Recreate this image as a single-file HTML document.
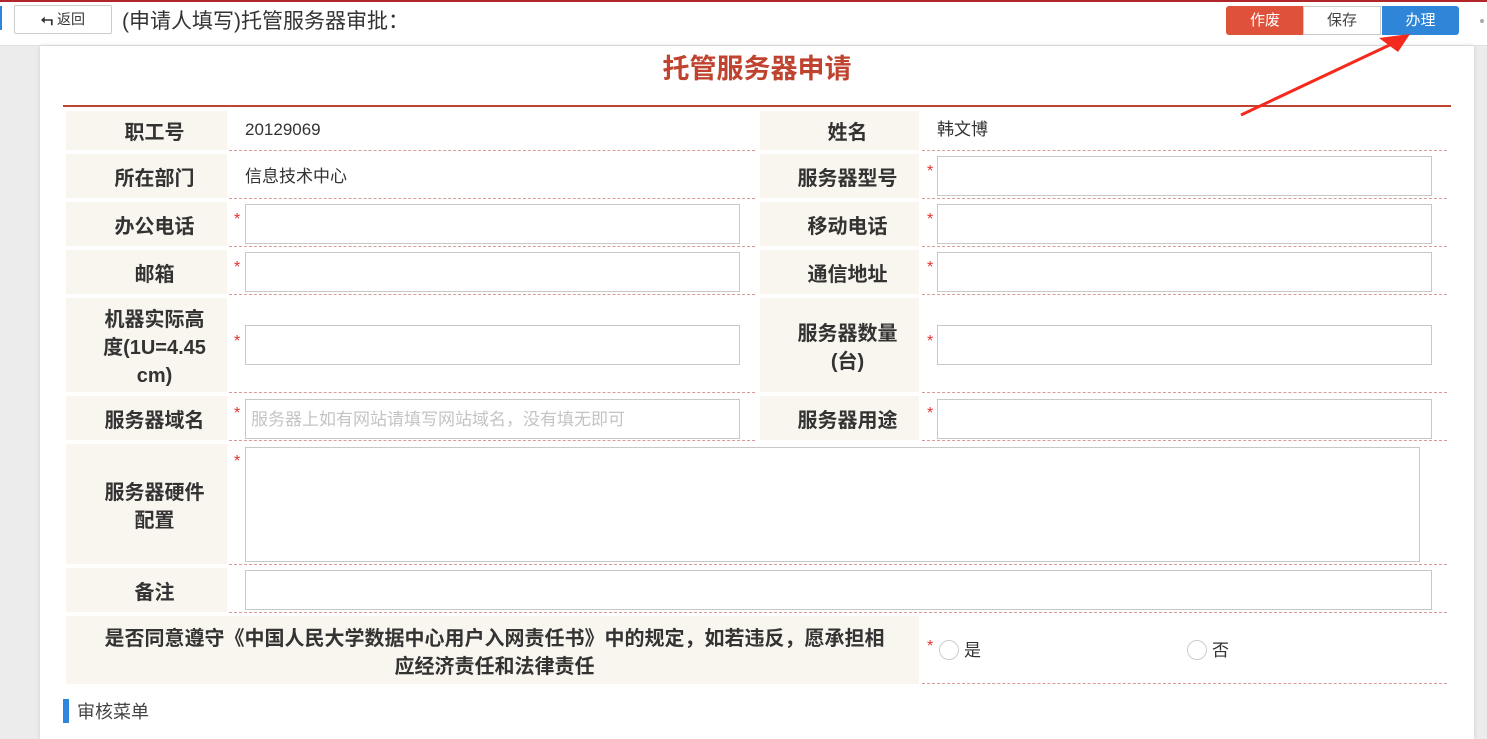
<!DOCTYPE html>
<html><head><meta charset="utf-8"><style>
*{margin:0;padding:0;box-sizing:border-box}
body{width:1487px;height:739px;overflow:hidden;background:#ececec;font-family:"Liberation Sans","Noto Sans CJK SC",sans-serif;position:relative;color:#333}
.a{position:absolute}
.lb{position:absolute;background:#f9f5ef;font-weight:bold;font-size:20px;color:#333;display:flex;align-items:center;justify-content:center;text-align:center;line-height:28px;padding:5px 0 0 16px}
.vc{position:absolute;border-bottom:1px dashed #d99a9a}
.in{position:absolute;border:1px solid #c8c8c8;background:#fff}
.st{position:absolute;color:#e83030;font-size:16px}
.tx{position:absolute;font-size:17px;color:#333;line-height:20px}
</style></head><body>
<div class="a" style="left:0;top:0;width:1487px;height:46px;background:#fff;border-bottom:1px solid #e2e2e2"></div>
<div class="a" style="left:0;top:0;width:1487px;height:2px;background:#b0262a"></div>
<div class="a" style="left:0;top:6px;width:2px;height:24px;background:#2e86de"></div>
<div class="a" style="left:14px;top:5px;width:98px;height:29px;border:1px solid #ccc;border-radius:2px;background:#fff;font-size:14px;line-height:27px;text-align:center;color:#333"><b style="font-size:15px">⮢</b> 返回</div>
<div class="a" style="left:122px;top:9px;font-size:21px;color:#333;line-height:26px">(申请人填写)托管服务器审批：</div>
<div class="a" style="left:1226px;top:6px;width:78px;height:29px;background:#df513b;border-radius:3px 0 0 3px;color:#fff;font-size:15px;line-height:29px;text-align:center">作废</div>
<div class="a" style="left:1303px;top:6px;width:78px;height:29px;background:#fff;border:1px solid #ccc;color:#444;font-size:15px;line-height:27px;text-align:center">保存</div>
<div class="a" style="left:1382px;top:6px;width:77px;height:29px;background:#2f86d9;border-radius:0 3px 3px 0;color:#fff;font-size:15px;line-height:29px;text-align:center">办理</div>
<div class="a" style="left:1480px;top:19px;width:4px;height:4px;border-radius:50%;background:#aaa"></div>
<div class="a" style="left:40px;top:46px;width:1434px;height:693px;background:#fff;box-shadow:0 0 4px #ccc"></div>
<div class="a" style="left:0;width:1487px;text-align:center;font-size:27px;font-weight:bold;color:#c0432f;top:51px;padding-left:27px;line-height:36px">托管服务器申请</div>
<div class="a" style="left:63px;top:105px;width:1388px;height:2px;background:#c0432f"></div>

<div class="lb" style="left:66px;top:111px;width:161px;height:39px">职工号</div>
<div class="vc" style="left:229px;top:111px;width:526px;height:40px"></div>
<div class="tx" style="left:245px;top:120px">20129069</div>
<div class="lb" style="left:760px;top:111px;width:159px;height:39px">姓名</div>
<div class="vc" style="left:922px;top:111px;width:525px;height:40px"></div>
<div class="tx" style="left:937px;top:120px">韩文博</div>

<div class="lb" style="left:66px;top:154px;width:161px;height:44px">所在部门</div>
<div class="vc" style="left:229px;top:154px;width:526px;height:45px"></div>
<div class="tx" style="left:245px;top:167px">信息技术中心</div>
<div class="lb" style="left:760px;top:154px;width:159px;height:44px">服务器型号</div>
<div class="vc" style="left:922px;top:154px;width:525px;height:45px"></div>
<div class="st" style="left:927px;top:163px">*</div><div class="in" style="left:937px;top:156px;width:495px;height:40px"></div>

<div class="lb" style="left:66px;top:202px;width:161px;height:44px">办公电话</div>
<div class="vc" style="left:229px;top:202px;width:526px;height:45px"></div>
<div class="st" style="left:234px;top:211px">*</div><div class="in" style="left:245px;top:204px;width:495px;height:40px"></div>
<div class="lb" style="left:760px;top:202px;width:159px;height:44px">移动电话</div>
<div class="vc" style="left:922px;top:202px;width:525px;height:45px"></div>
<div class="st" style="left:927px;top:211px">*</div><div class="in" style="left:937px;top:204px;width:495px;height:40px"></div>

<div class="lb" style="left:66px;top:250px;width:161px;height:44px">邮箱</div>
<div class="vc" style="left:229px;top:250px;width:526px;height:45px"></div>
<div class="st" style="left:234px;top:259px">*</div><div class="in" style="left:245px;top:252px;width:495px;height:40px"></div>
<div class="lb" style="left:760px;top:250px;width:159px;height:44px">通信地址</div>
<div class="vc" style="left:922px;top:250px;width:525px;height:45px"></div>
<div class="st" style="left:927px;top:259px">*</div><div class="in" style="left:937px;top:252px;width:495px;height:40px"></div>

<div class="lb" style="left:66px;top:298px;width:161px;height:94px">机器实际高<br>度(1U=4.45<br>cm)</div>
<div class="vc" style="left:229px;top:298px;width:526px;height:95px"></div>
<div class="st" style="left:234px;top:333px">*</div><div class="in" style="left:245px;top:325px;width:495px;height:40px"></div>
<div class="lb" style="left:760px;top:298px;width:159px;height:94px">服务器数量<br>(台)</div>
<div class="vc" style="left:922px;top:298px;width:525px;height:95px"></div>
<div class="st" style="left:927px;top:333px">*</div><div class="in" style="left:937px;top:325px;width:495px;height:40px"></div>

<div class="lb" style="left:66px;top:396px;width:161px;height:44px">服务器域名</div>
<div class="vc" style="left:229px;top:396px;width:526px;height:45px"></div>
<div class="st" style="left:234px;top:405px">*</div><div class="in" style="left:245px;top:399px;width:495px;height:40px;color:#c4c4c4;font-size:17px;padding:10px 0 0 5px;line-height:20px">服务器上如有网站请填写网站域名，没有填无即可</div>
<div class="lb" style="left:760px;top:396px;width:159px;height:44px">服务器用途</div>
<div class="vc" style="left:922px;top:396px;width:525px;height:45px"></div>
<div class="st" style="left:927px;top:405px">*</div><div class="in" style="left:937px;top:399px;width:495px;height:40px"></div>

<div class="lb" style="left:66px;top:444px;width:161px;height:120px">服务器硬件<br>配置</div>
<div class="vc" style="left:229px;top:444px;width:1218px;height:121px"></div>
<div class="st" style="left:234px;top:453px">*</div><div class="in" style="left:245px;top:447px;width:1175px;height:115px"></div>

<div class="lb" style="left:66px;top:568px;width:161px;height:44px">备注</div>
<div class="vc" style="left:229px;top:568px;width:1218px;height:45px"></div>
<div class="in" style="left:245px;top:570px;width:1187px;height:40px"></div>

<div class="lb" style="left:66px;top:616px;width:853px;height:68px;line-height:28px;padding:5px 0 0 4px">是否同意遵守《中国人民大学数据中心用户入网责任书》中的规定，如若违反，愿承担相<br>应经济责任和法律责任</div>
<div class="vc" style="left:922px;top:616px;width:525px;height:68px"></div>
<div class="st" style="left:927px;top:638px">*</div>
<div class="a" style="left:939px;top:640px;width:20px;height:20px;border:1px solid #ccc;border-radius:50%"></div>
<div class="tx" style="left:964px;top:641px">是</div>
<div class="a" style="left:1187px;top:640px;width:20px;height:20px;border:1px solid #ccc;border-radius:50%"></div>
<div class="tx" style="left:1212px;top:641px">否</div>

<div class="a" style="left:63px;top:699px;width:6px;height:24px;background:#2e86de"></div>
<div class="a" style="left:77px;top:701px;font-size:18px;color:#444;line-height:22px">审核菜单</div>

<svg class="a" style="left:0;top:0" width="1487" height="739">
<line x1="1241" y1="115" x2="1396" y2="42" stroke="#f52a1e" stroke-width="3"/>
<polygon points="1410,34 1379,38 1398,52" fill="#f52a1e"/>
</svg>
</body></html>
